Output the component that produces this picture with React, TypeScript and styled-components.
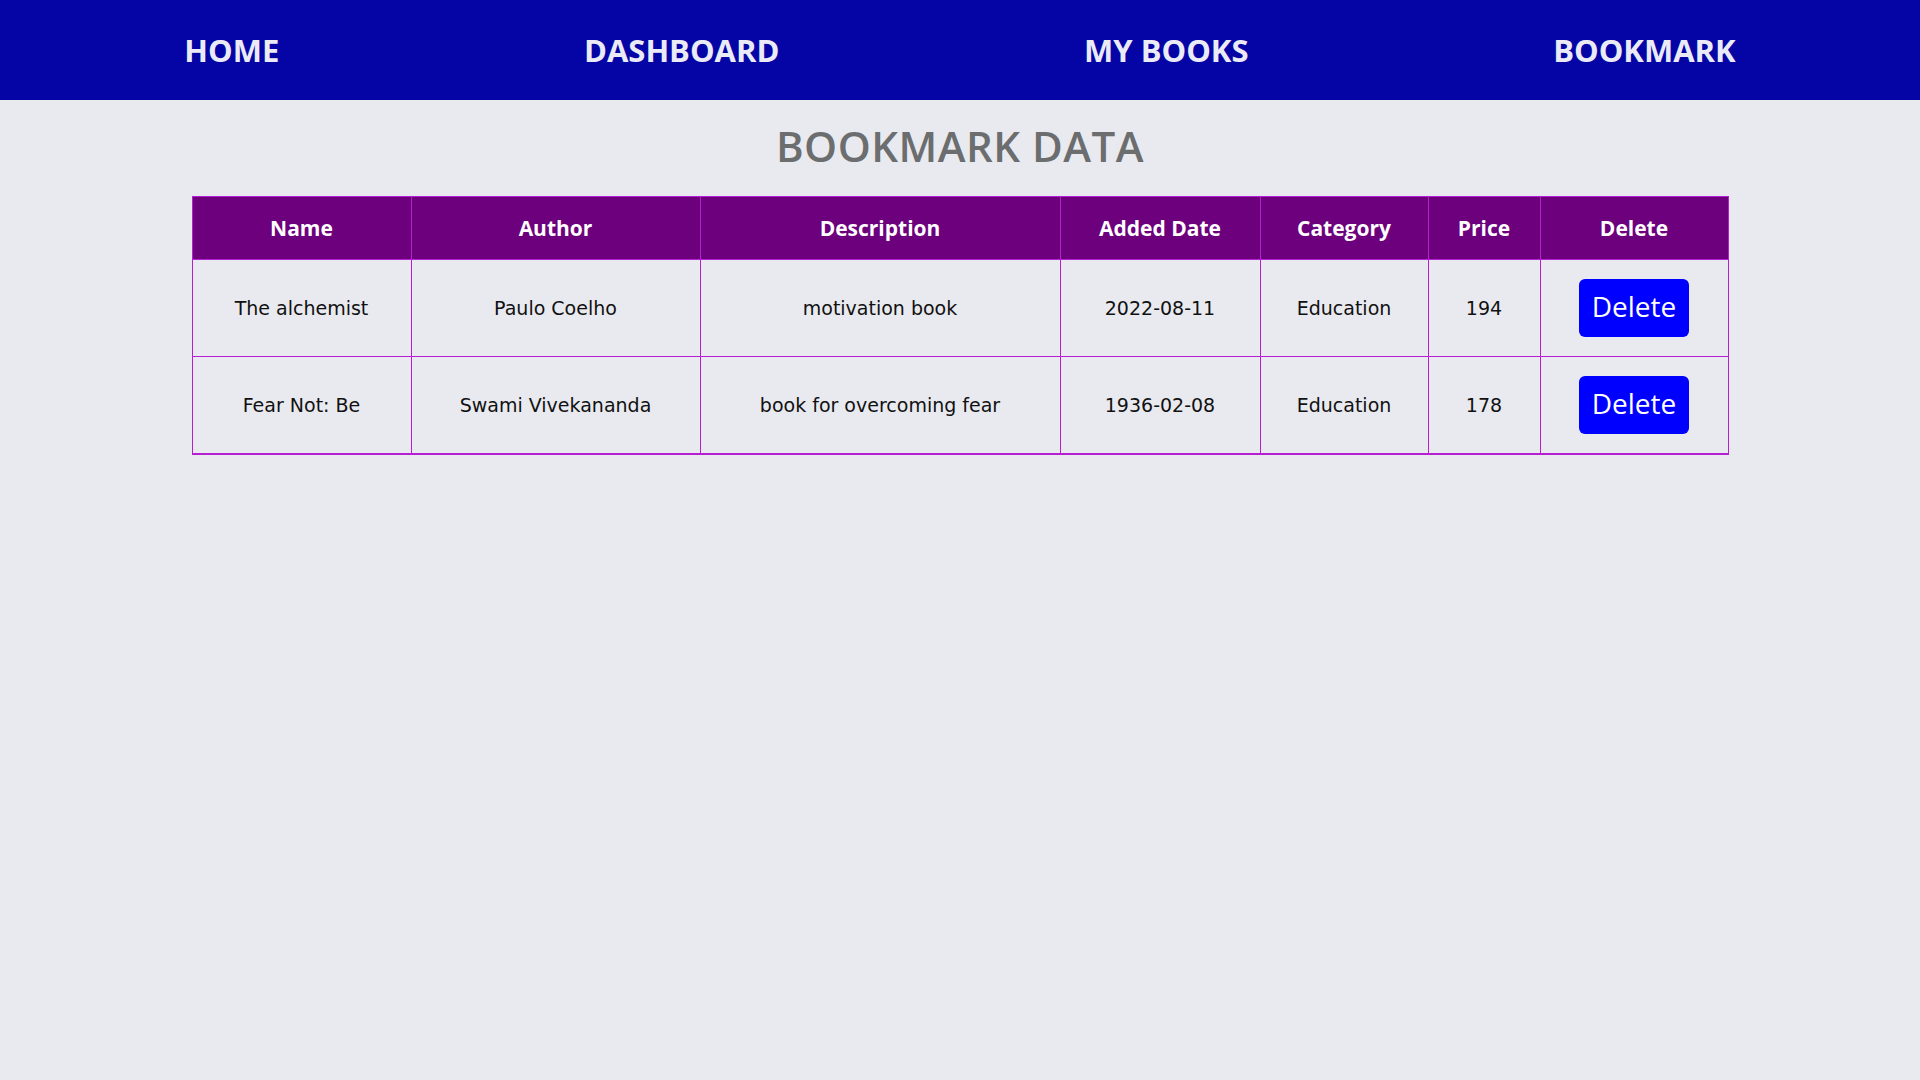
import React from "react";
import styled, { createGlobalStyle } from "styled-components";

const GlobalStyle = createGlobalStyle`
  html, body { margin: 0; padding: 0; }
  body {
    background: #e9eaef;
    font-family: "Open Sans", "Noto Sans", sans-serif;
    min-height: 1080px;
  }
`;

const NavBar = styled.nav`
  height: 100px;
  background: #0505a5;
  display: flex;
  align-items: center;
  justify-content: space-around;
  padding: 0 32px;
`;

const NavLink = styled.a`
  color: #ebebf7;
  font-family: "Open Sans", sans-serif;
  font-weight: 700;
  font-size: 31px;
  text-decoration: none;
  cursor: pointer;
`;

const Title = styled.h1`
  margin: 18px 0 22px;
  text-align: center;
  font-family: "Open Sans", sans-serif;
  font-weight: 600;
  font-size: 42px;
  line-height: 56px;
  color: #6b6d6e;
  letter-spacing: 0.5px;
`;

const Table = styled.table`
  width: 1536px;
  margin: 0 auto;
  border-collapse: collapse;
  table-layout: fixed;
  border: 1px solid #b61fd2;
  border-bottom-width: 2px;
`;

const HeadCell = styled.th`
  background: #6d007d;
  color: #ffffff;
  font-family: "Open Sans", sans-serif;
  font-weight: 700;
  font-size: 21px;
  line-height: 28px;
  padding: 17px 6px;
  border: 1px solid #b61fd2;
  text-align: center;
`;

const Cell = styled.td`
  font-family: "DejaVu Sans", sans-serif;
  font-size: 19px;
  color: #111;
  text-align: center;
  padding: 19px 6px;
  height: 58px;
  line-height: 24px;
  border: 1px solid #b61fd2;
`;

const DeleteButton = styled.button`
  display: inline-block;
  background: #0000ff;
  color: #fff;
  border: none;
  border-radius: 6px;
  height: 58px;
  width: 110px;
  padding: 0 0 3px;
  font-family: "Open Sans", sans-serif;
  font-size: 28px;
  line-height: 55px;
  vertical-align: top;
  cursor: pointer;
`;

const columns = [
  { label: "Name", width: 219 },
  { label: "Author", width: 289 },
  { label: "Description", width: 360 },
  { label: "Added Date", width: 200 },
  { label: "Category", width: 168 },
  { label: "Price", width: 112 },
  { label: "Delete", width: 188 },
];

const rows = [
  {
    name: "The alchemist",
    author: "Paulo Coelho",
    description: "motivation book",
    date: "2022-08-11",
    category: "Education",
    price: 194,
  },
  {
    name: "Fear Not: Be",
    author: "Swami Vivekananda",
    description: "book for overcoming fear",
    date: "1936-02-08",
    category: "Education",
    price: 178,
  },
];

export default function App() {
  return (
    <>
      <GlobalStyle />
      <NavBar>
        <NavLink>HOME</NavLink>
        <NavLink>DASHBOARD</NavLink>
        <NavLink>MY BOOKS</NavLink>
        <NavLink>BOOKMARK</NavLink>
      </NavBar>
      <Title>BOOKMARK DATA</Title>
      <Table>
        <colgroup>
          {columns.map((c) => (
            <col key={c.label} style={{ width: c.width }} />
          ))}
        </colgroup>
        <thead>
          <tr>
            {columns.map((c) => (
              <HeadCell key={c.label}>{c.label}</HeadCell>
            ))}
          </tr>
        </thead>
        <tbody>
          {rows.map((r) => (
            <tr key={r.name}>
              <Cell>{r.name}</Cell>
              <Cell>{r.author}</Cell>
              <Cell>{r.description}</Cell>
              <Cell>{r.date}</Cell>
              <Cell>{r.category}</Cell>
              <Cell>{r.price}</Cell>
              <Cell>
                <DeleteButton>Delete</DeleteButton>
              </Cell>
            </tr>
          ))}
        </tbody>
      </Table>
    </>
  );
}
